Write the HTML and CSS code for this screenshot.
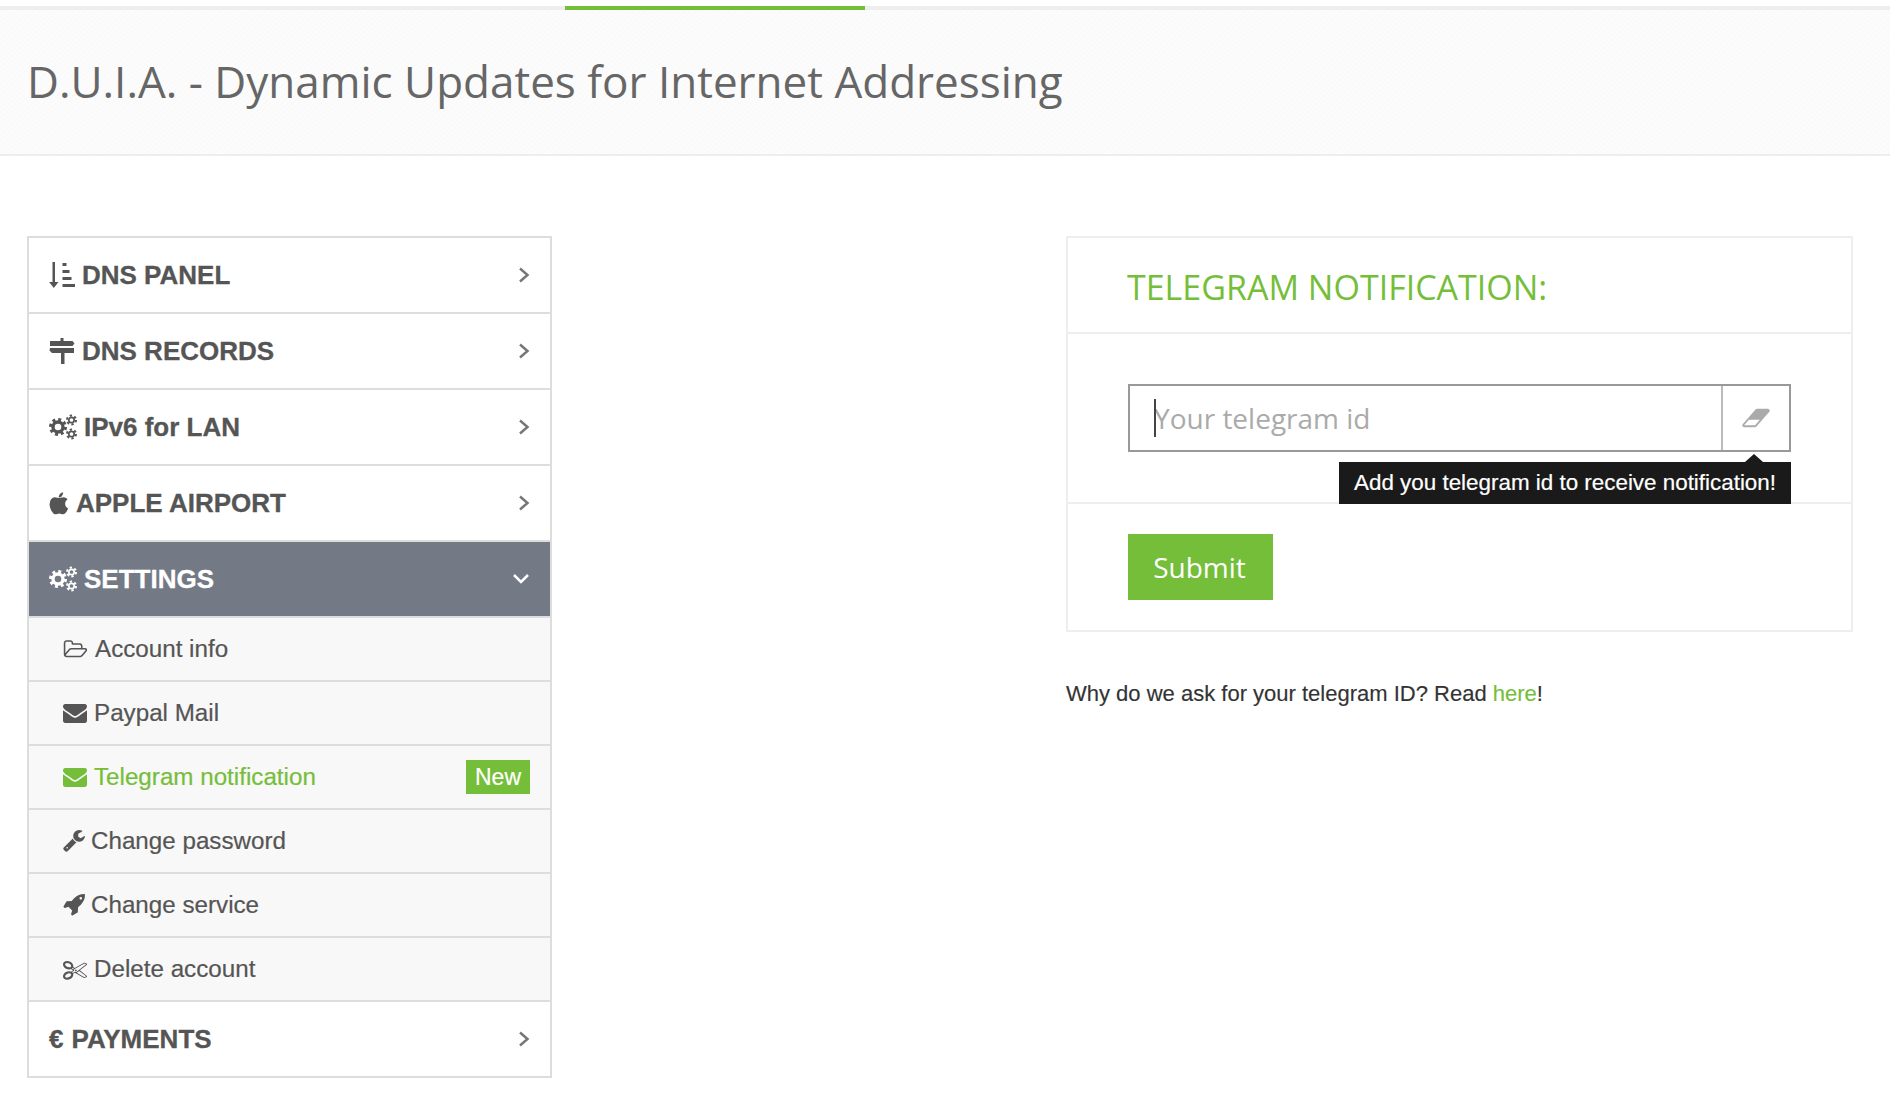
FILE: index.html
```html
<!DOCTYPE html>
<html lang="en">
<head>
    <meta charset="UTF-8">
    <title>D.U.I.A. - Telegram notification</title>
    <link rel="stylesheet" href="styles.css">
</head>
<body>
    <div class="top-line"><span class="top-line-active"></span></div>

    <header class="page-head">
        <h1>D.U.I.A. - Dynamic Updates for Internet Addressing</h1>
    </header>

    <div class="content">
        <nav class="menu">
            <a class="menu-item">
                <svg class="icon icon-sort" viewBox="0 0 26 26"><path d="M3.500 0H6v20h3.500l-4.700 6-4.700-6h3.400z"/><path d="M13.500 1h4v3h-4zM13.500 8h7v3h-7zM13.500 15h9v3h-9zM13.500 22H26v3H13.500z"/></svg>
                <span>DNS PANEL</span>
                <svg class="chevron" viewBox="0 0 12 16"><path d="M2 1.500L9.500 8 2 14.500"/></svg>
            </a>
            <a class="menu-item">
                <svg class="icon icon-sort" viewBox="0 0 26 26"><path d="M11.500 0h3v3h9l2 2.500-2 2.500H1V3h10.500zM1 10h24v5h-9.500v11h-3.500V15H3l-2.500-2.500z"/></svg>
                <span>DNS RECORDS</span>
                <svg class="chevron" viewBox="0 0 12 16"><path d="M2 1.500L9.500 8 2 14.500"/></svg>
            </a>
            <a class="menu-item">
                <svg class="icon icon-gears" viewBox="0 0 28 26">
                    <circle class="gear-ring" cx="9" cy="13" r="5"/><circle class="gear-teeth" cx="9" cy="13" r="7.500"/>
                    <circle class="gear-small" cx="22.500" cy="6" r="2.700"/><circle class="gear-small-teeth" cx="22.500" cy="6" r="4.500"/>
                    <circle class="gear-small" cx="22.500" cy="20" r="2.700"/><circle class="gear-small-teeth" cx="22.500" cy="20" r="4.500"/>
                </svg>
                <span>IPv6 for LAN</span>
                <svg class="chevron" viewBox="0 0 12 16"><path d="M2 1.500L9.500 8 2 14.500"/></svg>
            </a>
            <a class="menu-item">
                <svg class="icon icon-apple" viewBox="150 0 1500 1700"><path d="M1585 1215q-39 125-123 250-129 196-257 196-49 0-140-32-86-32-151-32-61 0-142 33-81 34-132 34-152 0-301-259-147-261-147-503 0-228 113-374 113-144 284-144 72 0 177 30 104 30 138 30 45 0 143-34 102-34 173-34 119 0 213 65 52 36 104 100-79 67-114 118-65 94-65 207 0 124 69 223t158 126zm-376-1173q0 61-29 136-30 75-93 138-54 54-108 72-37 11-104 17 3-149 78-257 74-107 250-148 1 3 2.500 11t2.500 11q0 4 .5 10t.5 10z"/></svg>
                <span>APPLE AIRPORT</span>
                <svg class="chevron" viewBox="0 0 12 16"><path d="M2 1.500L9.500 8 2 14.500"/></svg>
            </a>
            <a class="menu-item menu-item-open">
                <svg class="icon icon-gears" viewBox="0 0 28 26">
                    <circle class="gear-ring" cx="9" cy="13" r="5"/><circle class="gear-teeth" cx="9" cy="13" r="7.500"/>
                    <circle class="gear-small" cx="22.500" cy="6" r="2.700"/><circle class="gear-small-teeth" cx="22.500" cy="6" r="4.500"/>
                    <circle class="gear-small" cx="22.500" cy="20" r="2.700"/><circle class="gear-small-teeth" cx="22.500" cy="20" r="4.500"/>
                </svg>
                <span>SETTINGS</span>
                <svg class="chevron-down" viewBox="0 0 16 12"><path d="M1 2l7 7 7-7"/></svg>
            </a>
            <div class="submenu">
                <a class="sub-item">
                    <svg class="sub-icon icon-wide" viewBox="0 128 2048 1536"><path d="M1845 931q0-35-53-35h-1088q-40 0-85.500 21.500t-71.500 52.500l-294 363q-18 24-18 40 0 35 53 35h1088q40 0 86-22t71-53l294-363q18-22 18-39zm-1141-163h768v-160q0-40-28-68t-68-28h-576q-40 0-68-28t-28-68v-64q0-40-28-68t-68-28h-320q-40 0-68 28t-28 68v853l256-315q44-53 116-87.500t140-34.500zm1269 163q0 62-46 120l-295 363q-43 53-116 87.500t-140 34.500h-1088q-92 0-158-66t-66-158v-960q0-92 66-158t158-66h320q92 0 158 66t66 158v32h544q92 0 158 66t66 158v160h192q54 0 99 24.500t67 70.500q15 32 15 68z"/></svg>
                    <span>Account info</span>
                </a>
                <a class="sub-item">
                    <svg class="sub-icon icon-mail" viewBox="0 256 1792 1408"><path d="M1792 710v794q0 66-47 113t-113 47h-1472q-66 0-113-47t-47-113v-794q44 49 101 87 362 246 497 345 57 42 92.500 65.500t94.500 48 110 24.500h2q51 0 110-24.500t94.500-48 92.500-65.500q170-123 498-345 57-39 100-87zm0-294q0 79-49 151t-122 123q-376 261-468 325-10 7-42.500 30.500t-54 38-52 32.500-57.500 27-50 9h-2q-23 0-50-9t-57.500-27-52-32.500-54-38-42.500-30.500q-91-64-262-182.500t-205-142.500q-62-42-117-115.500t-55-136.500q0-78 41.500-130t118.500-52h1472q65 0 112.500 47t47.500 113z"/></svg>
                    <span>Paypal Mail</span>
                </a>
                <a class="sub-item sub-item-active">
                    <svg class="sub-icon icon-mail" viewBox="0 256 1792 1408"><path d="M1792 710v794q0 66-47 113t-113 47h-1472q-66 0-113-47t-47-113v-794q44 49 101 87 362 246 497 345 57 42 92.500 65.500t94.500 48 110 24.500h2q51 0 110-24.500t94.500-48 92.500-65.500q170-123 498-345 57-39 100-87zm0-294q0 79-49 151t-122 123q-376 261-468 325-10 7-42.500 30.500t-54 38-52 32.500-57.500 27-50 9h-2q-23 0-50-9t-57.500-27-52-32.500-54-38-42.500-30.500q-91-64-262-182.500t-205-142.500q-62-42-117-115.500t-55-136.500q0-78 41.500-130t118.500-52h1472q65 0 112.500 47t47.500 113z"/></svg>
                    <span>Telegram notification</span>
                    <span class="badge">New</span>
                </a>
                <a class="sub-item">
                    <svg class="sub-icon icon-tool" viewBox="64 128 1664 1664"><path d="M448 1472q0-26-19-45t-45-19-45 19-19 45 19 45 45 19 45-19 19-45zm644-420l-682 682q-37 37-90 37-52 0-91-37l-106-108q-38-36-38-90 0-53 38-91l681-681q39 98 114.500 173.500t173.500 114.500zm634-435q0 39-23 106-47 134-164.500 217.500t-258.500 83.500q-185 0-316.500-131.500t-131.500-316.500 131.500-316.500 316.500-131.500q58 0 121.500 16.500t107.500 46.500q16 11 16 28t-16 28l-293 169v224l193 107q5-3 79-48.500t135.500-81 70.500-35.500q15 0 23.500 10t8.500 25z"/></svg>
                    <span>Change password</span>
                </a>
                <a class="sub-item">
                    <svg class="sub-icon icon-tool" viewBox="64 128 1664 1664"><path d="M1504 448q0-40-28-68t-68-28-68 28-28 68 28 68 68 28 68-28 28-68zm224-288q0 249-75.500 430.500t-253.500 360.500q-81 80-195 176l-20 379q-2 16-16 26l-384 224q-7 4-16 4-12 0-23-9l-64-64q-13-14-8-32l85-276-281-281-276 85q-3 1-9 1-14 0-23-9l-64-64q-17-19-5-39l224-384q10-14 26-16l379-20q96-114 176-195 188-187 358-258t431-71q14 0 24 9.500t10 22.500z"/></svg>
                    <span>Change service</span>
                </a>
                <a class="sub-item">
                    <svg class="sub-icon icon-cut" viewBox="0 128 1792 1536"><path d="M960 896q26 0 45 19t19 45-19 45-45 19-45-19-19-45 19-45 45-19zm300 64l507 398q28 20 25 56-5 35-35 51l-128 64q-13 7-29 7-17 0-31-8l-690-387-110 66q-8 4-12 5 14 49 10 97-7 77-56 147.500t-132 123.500q-132 84-277 84-136 0-222-78-90-84-79-207 7-76 56-147t131-124q132-84 278-84 83 0 151 31 9-13 22-22l122-73-122-73q-13-9-22-22-68 31-151 31-146 0-278-84-82-53-131-124t-56-147q-5-59 15.500-113t63.500-93q85-79 222-79 145 0 277 84 83 52 132 123t56 148q4 48-10 97 4 1 12 5l110 66 690-387q14-8 31-8 16 0 29 7l128 64q30 16 35 51 3 36-25 56zm-681-260q46-42 21-108t-106-117q-92-59-192-59-74 0-113 36-46 42-21 108t106 117q92 59 192 59 74 0 113-36zm-85 745q81-51 106-117t-21-108q-39-36-113-36-100 0-192 59-81 51-106 117t21 108q39 36 113 36 100 0 192-59zm178-613l96 58v-11q0-36 33-56l14-8-79-47-26 26q-3 3-10 11t-12 12q-2 2-4 3.500t-3 2.500zm224 224l96 32 736-576-128-64-768 431v113l-160 96 9 8q2 2 7 6 4 4 11 12t11 12l26 26zm704 416l128-64-520-408-177 138q-2 3-13 7z"/></svg>
                    <span>Delete account</span>
                </a>
            </div>
            <a class="menu-item">
                <span class="euro">€</span>
                <span>PAYMENTS</span>
                <svg class="chevron" viewBox="0 0 12 16"><path d="M2 1.500L9.500 8 2 14.500"/></svg>
            </a>
        </nav>

        <main class="main-col">
            <section class="panel">
                <div class="panel-head">
                    <h2>TELEGRAM NOTIFICATION:</h2>
                </div>
                <div class="panel-body">
                    <div class="input-group">
                        <input type="text" class="telegram-input" placeholder="Your telegram id">
                        <span class="caret"></span>
                        <span class="input-addon">
                            <svg class="eraser" viewBox="0 128 2048 1536"><path d="M960 1408l336-384h-768l-336 384h768zm1013-1077q15 34 9.500 71.500t-30.500 65.500l-896 1024q-38 44-96 44h-768q-38 0-69.500-20.500t-47.500-54.500q-15-34-9.500-71.500t30.500-65.500l896-1024q38-44 96-44h768q38 0 70 20.500t47 54.500z"/></svg>
                        </span>
                        <div class="tooltip">Add you telegram id to receive notification!</div>
                    </div>
                </div>
                <div class="panel-foot">
                    <button class="submit-button">Submit</button>
                </div>
            </section>
            <p class="note">Why do we ask for your telegram ID? Read <a class="note-link">here</a>!</p>
        </main>
    </div>
</body>
</html>
```

FILE: styles.css
```css
body {
    margin: 0;
    background: #fff;
    font-family: "Liberation Sans", Arial, sans-serif;
    color: #555;
}

/* top strip */
.top-line {
    height: 4px;
    margin-top: 6px;
    background: #eee;
}
.top-line-active {
    display: block;
    width: 300px;
    height: 4px;
    margin-left: 565px;
    background: #75be3a;
}

.page-head {
    display: flex;
    align-items: center;
    height: 142px;
    padding: 0 0 2px 27px;
    border-bottom: 2px solid #eee;
    background: repeating-linear-gradient(135deg, #fafafa 0, #fafafa 2px, #fcfcfc 2px, #fcfcfc 4px);
}
.page-head h1 {
    margin: 0;
    font-family: "Open Sans", sans-serif;
    font-size: 44px;
    font-weight: 400;
    color: #666;
}

.content {
    display: flex;
    justify-content: space-between;
    align-items: flex-start;
    padding: 80px 37px 0 27px;
}

/* left menu */
.menu {
    display: flex;
    flex-direction: column;
    width: 521px;
    border: 2px solid #ddd;
    border-bottom: none;
}
.menu-item {
    display: flex;
    align-items: center;
    height: 74px;
    padding: 0 20px;
    border-bottom: 2px solid #ddd;
    font-size: 26px;
    font-weight: 700;
    color: #555;
    -webkit-text-stroke: 0.3px currentColor;
}
.menu-item-open {
    background: #737985;
    color: #fff;
}
.icon {
    flex: none;
    margin-right: 7px;
    fill: currentColor;
}
.icon-sort {
    width: 26px;
    height: 26px;
}
.icon-gears {
    width: 28px;
    height: 26px;
}
.icon-apple {
    width: 20px;
    height: 23px;
}
.gear-ring {
    fill: none;
    stroke: currentColor;
    stroke-width: 3.400;
}
.gear-teeth {
    fill: none;
    stroke: currentColor;
    stroke-width: 3;
    stroke-dasharray: 2.950 2.940;
}
.gear-small {
    fill: none;
    stroke: currentColor;
    stroke-width: 1.700;
}
.gear-small-teeth {
    fill: none;
    stroke: currentColor;
    stroke-width: 2;
    stroke-dasharray: 2.360 2.350;
}
.euro {
    margin-right: 8px;
}
.chevron {
    width: 12px;
    height: 16px;
    margin-left: auto;
    fill: none;
    stroke: #777;
    stroke-width: 2.500;
}
.chevron-down {
    width: 16px;
    height: 12px;
    margin-left: auto;
    margin-right: 1px;
    fill: none;
    stroke: #fff;
    stroke-width: 2.500;
}

.submenu {
    display: flex;
    flex-direction: column;
}
.sub-item {
    display: flex;
    align-items: center;
    height: 62px;
    padding: 0 20px 0 34px;
    border-bottom: 2px solid #ddd;
    background: #f8f8f8;
    font-size: 24.200px;
    color: #555;
    -webkit-text-stroke: 0.2px currentColor;
}
.sub-item-active {
    color: #75be3a;
}
.sub-icon {
    flex: none;
    margin-right: 7px;
    fill: currentColor;
    stroke: none;
}
.icon-wide {
    width: 25px;
    height: 19px;
}
.icon-mail {
    width: 24px;
    height: 19px;
}
.icon-tool {
    width: 22px;
    height: 22px;
    margin-right: 6px;
}
.icon-cut {
    width: 24px;
    height: 21px;
}
.badge {
    margin-left: auto;
    padding: 3px 9px;
    background: #75be3a;
    color: #fff;
    font-size: 23px;
    line-height: 28px;
}

/* right column */
.main-col {
    width: 787px;
}
.panel {
    border: 2px solid #eee;
}
.panel-head {
    display: flex;
    align-items: center;
    height: 90px;
    padding: 4px 0 0 59px;
    border-bottom: 2px solid #eee;
}
.panel-head h2 {
    margin: 0;
    font-family: "Open Sans", sans-serif;
    font-size: 34px;
    font-weight: 400;
    color: #75be3a;
}
.panel-body {
    height: 118px;
    padding: 50px 60px 0;
    border-bottom: 2px solid #eee;
}
.input-group {
    position: relative;
    display: flex;
    height: 68px;
    width: 663px;
    box-sizing: border-box;
    border: 2px solid #999;
}
.telegram-input {
    flex: 1;
    min-width: 0;
    padding: 0 0 0 24px;
    border: none;
    outline: none;
    font-family: "Open Sans", sans-serif;
    font-size: 28px;
    color: #555;
}
.telegram-input::placeholder {
    color: #aaa;
    opacity: 1;
}
.caret {
    position: absolute;
    left: 24px;
    top: 13px;
    width: 2px;
    height: 38px;
    background: #444;
}
.input-addon {
    display: flex;
    align-items: center;
    justify-content: center;
    flex: none;
    width: 66px;
    border-left: 2px solid #bbb;
}
.eraser {
    width: 30px;
    height: 22px;
    fill: #aaa;
}
.tooltip {
    position: absolute;
    right: -2px;
    top: 76px;
    padding: 0 15px;
    background: #1a1a1a;
    color: #fff;
    font-size: 22.400px;
    line-height: 42px;
    white-space: nowrap;
    -webkit-text-stroke: 0.2px currentColor;
}
.tooltip::before {
    content: "";
    position: absolute;
    right: 28px;
    top: -8px;
    border-left: 9px solid transparent;
    border-right: 9px solid transparent;
    border-bottom: 8px solid #1a1a1a;
}
.panel-foot {
    padding: 30px 60px;
}
.submit-button {
    display: block;
    width: 145px;
    height: 66px;
    padding: 0 2px 0 0;
    border: none;
    background: #75be3a;
    color: #fff;
    font-family: "Open Sans", sans-serif;
    font-size: 28px;
}
.note {
    margin: 49px 0 0;
    font-size: 22px;
    color: #333;
    -webkit-text-stroke: 0.15px currentColor;
}
.note-link {
    color: #75be3a;
}
```
